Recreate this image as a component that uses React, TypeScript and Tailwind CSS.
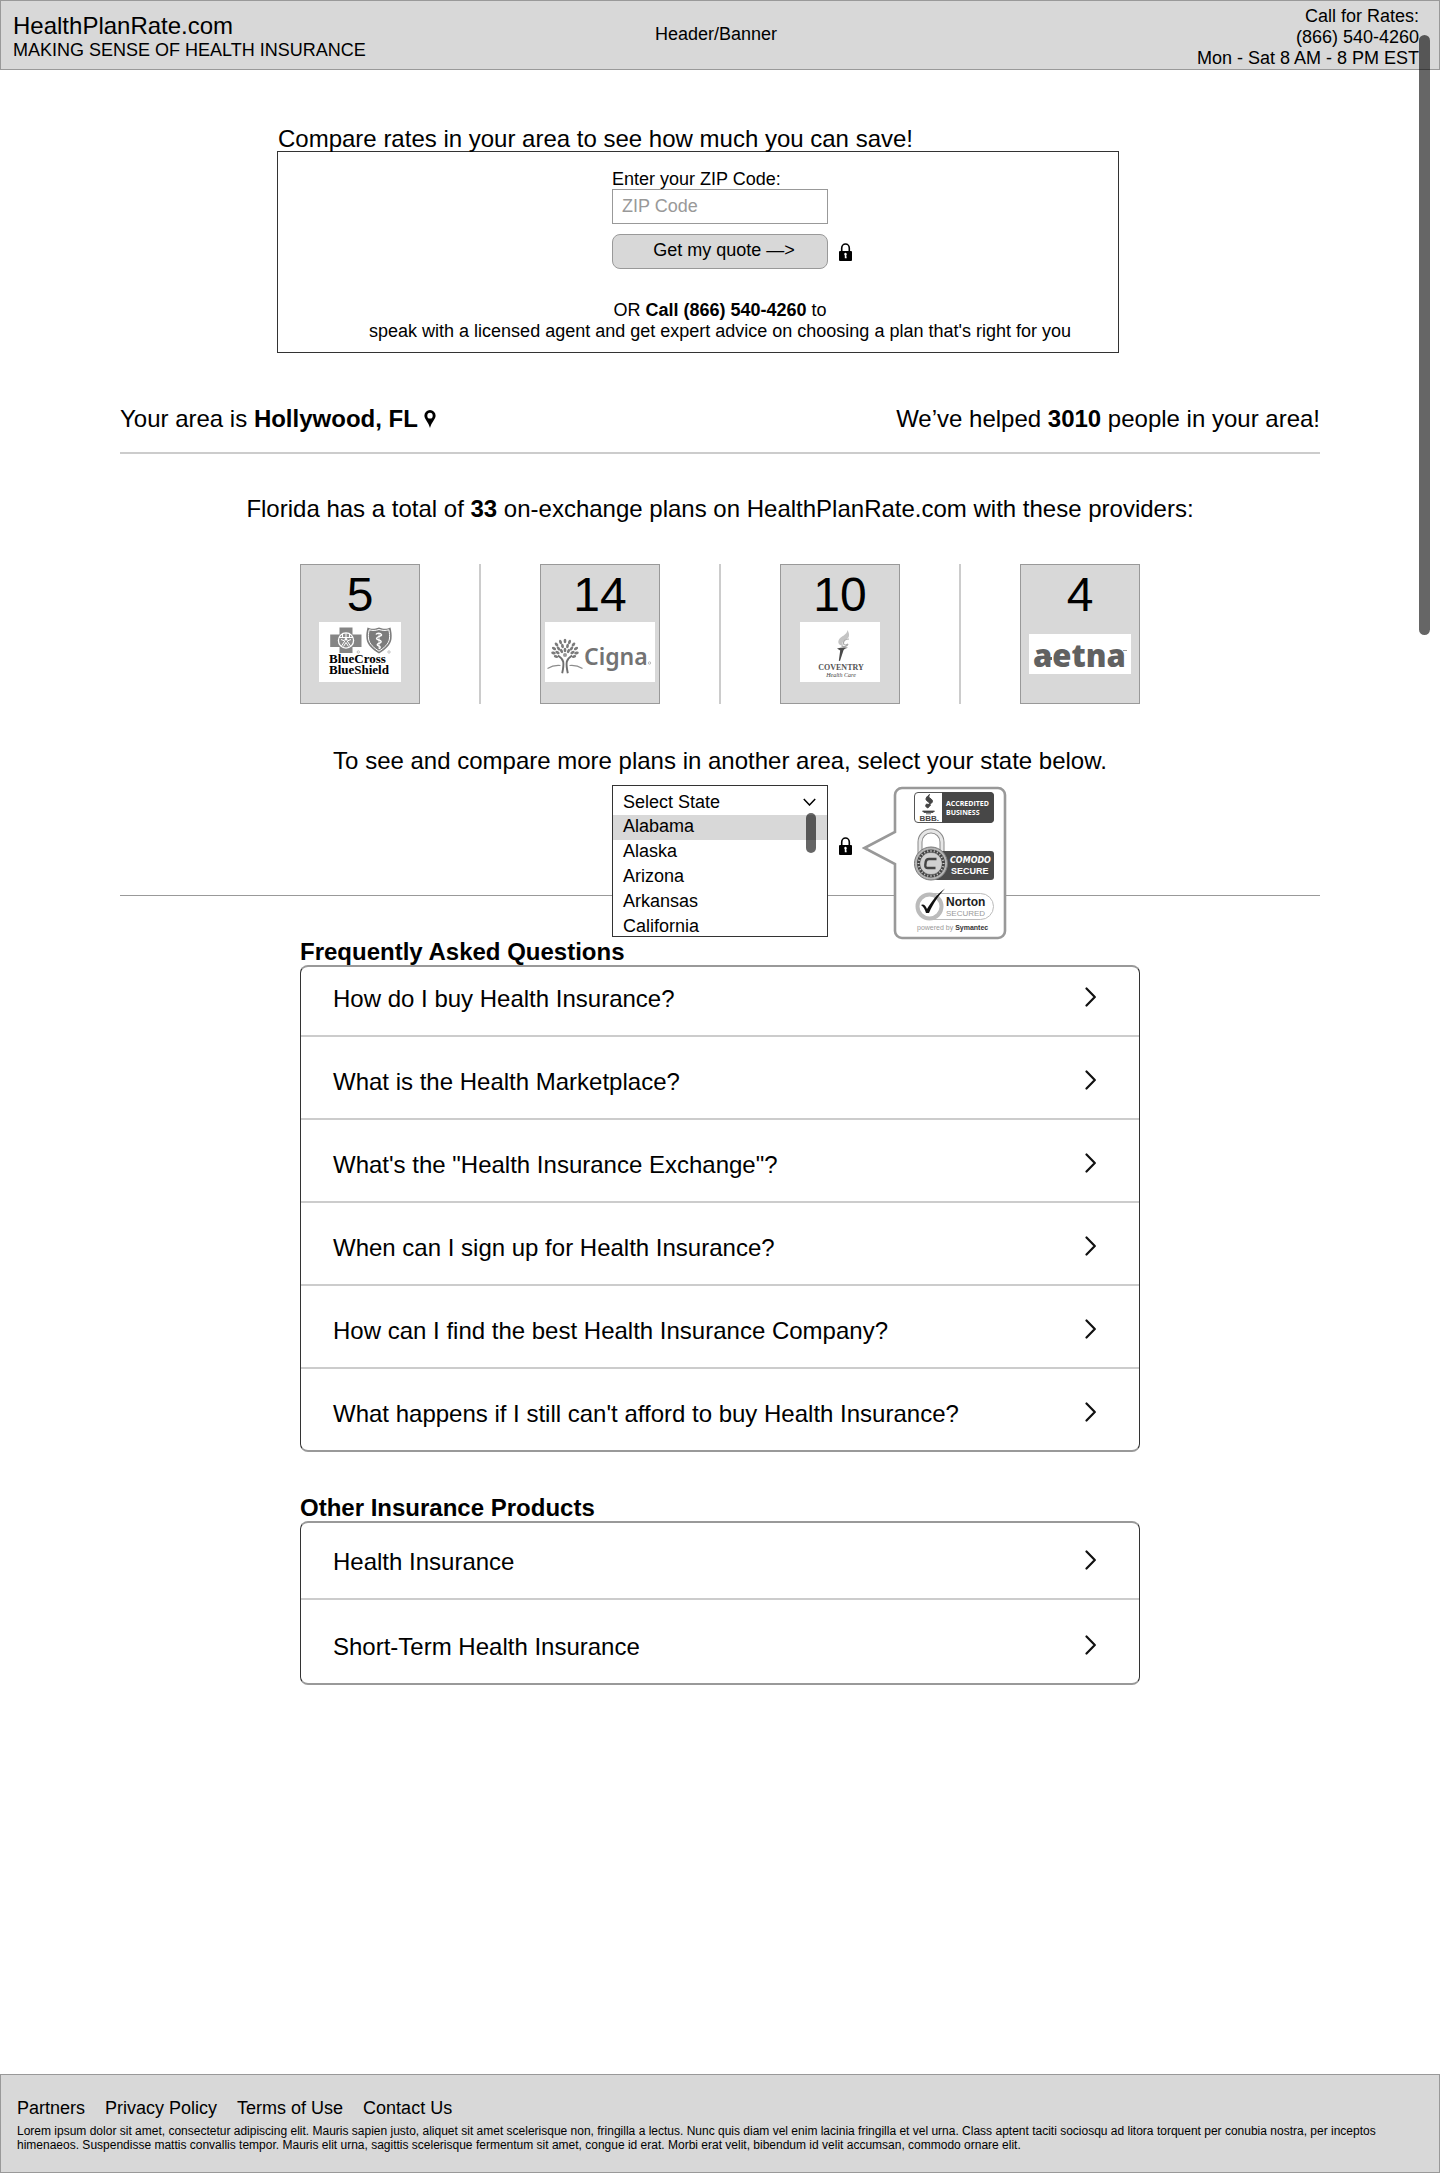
import type { ReactNode } from "react";

function LockIcon() {
  return (
    <svg width="13" height="18" viewBox="0 0 13 18" aria-hidden="true">
      <path d="M2.7 9V5.2a3.8 4.2 0 0 1 7.6 0V9" fill="none" stroke="#000" strokeWidth="1.6" />
      <rect x="0" y="8" width="13" height="10" rx="1" fill="#000" />
      <path d="M5.2 11.2a1.3 1.3 0 1 1 2.1 1l.4 3H5.8V12.4z" fill="#fff" />
    </svg>
  );
}

function PinIcon() {
  return (
    <svg width="12" height="18" viewBox="0 0 12 18" className="inline-block" aria-hidden="true">
      <path
        fillRule="evenodd"
        d="M6 0a5.6 5.6 0 0 0-5.6 5.7C.4 9.2 4.500 12 6 18c1.500-6 5.600-8.800 5.600-12.300A5.600 5.700 0 0 0 6 0zM6 2.800a2.700 2.900 0 1 1 0 5.800a2.700 2.900 0 0 1 0-5.800z"
        fill="#000"
      />
    </svg>
  );
}

function ChevronRight() {
  return (
    <svg width="12" height="20" viewBox="0 0 12 20" fill="none" className="shrink-0" aria-hidden="true">
      <path d="M1.500 1.500 9.800 10 1.500 18.500" stroke="#111" strokeWidth="2.200" strokeLinecap="round" strokeLinejoin="round" />
    </svg>
  );
}

function BlueCrossLogo() {
  return (
    <svg width="82" height="60" viewBox="0 0 82 60" className="bg-white" role="img" aria-label="BlueCross BlueShield">
      <path d="M20.500 5.500h13v7h9v12.500h-9v6h-13v-6h-9.300V12.500h9.300z" fill="#858585" />
      <circle cx="27" cy="18.500" r="7.600" fill="#8d8d8d" stroke="#fff" strokeWidth="1.300" />
      <path
        d="M20 15.500h14M27 11v5M23.500 12v3.500M30.500 12v3.500M22 17.500l3.800 1.500-3.300 5M32 17.500l-3.800 1.500 3.300 5M24.500 24.500 27 20.500l2.500 4"
        fill="none"
        stroke="#fff"
        strokeWidth="1"
      />
      <circle cx="27" cy="17.300" r="1.300" fill="#fff" />
      <path d="M48.500 5.500c4 1.800 7 1.500 11.500 0c4.500 1.500 7.500 1.800 11.500 0c.8 3.500 1.600 7 1 11.500c-.8 6-6 10.500-12.500 14.500c-6.500-4-11.700-8.500-12.500-14.500c-.6-4.500.2-8 1-11.500z" fill="#7c7c7c" />
      <path d="M50.200 7.800c3.500 1 6.300.8 9.800-.3c3.500 1.100 6.300 1.300 9.800.3c.8 3.200 1 6.200.6 9.200c-.8 5-5 8.700-10.400 12.200c-5.400-3.500-9.600-7.200-10.400-12.200c-.4-3-.2-6 .6-9.200z" fill="none" stroke="#fff" strokeWidth="1" />
      <path d="M60 11v16" stroke="#ddd" strokeWidth="1" />
      <path d="M57 12.500c1-1.800 4.500-1.500 5.500.2c.6 1.500-4.800 1.800-5 3.800c0 1.700 4.700 1.300 4.700 3.200c0 1.600-4 1.500-4 3c0 1.300 3 1.200 3 2.500c0 1-1.200 1.500-1.200 1.500" fill="none" stroke="#fff" strokeWidth="1.400" />
      <circle cx="39.300" cy="30" r="1.200" fill="none" stroke="#aaa" strokeWidth=".7" />
      <circle cx="70" cy="30" r="1.200" fill="none" stroke="#aaa" strokeWidth=".7" />
      <text x="10" y="41" className="font-['Liberation_Serif',serif] text-[13px] font-bold">BlueCross</text>
      <text x="10" y="52" className="font-['Liberation_Serif',serif] text-[13px] font-bold">BlueShield</text>
    </svg>
  );
}

const LEAVES: [number, number, number][] = [
  [20, 19, 0], [15.5, 20, -20], [24.500, 20, 20], [11.500, 22.500, -40], [28.500, 22.500, 40],
  [9, 26.500, -60], [31, 26.500, 60], [8.500, 31, -80], [31.500, 31, 80], [17.500, 24, -12],
  [22.500, 24, 12], [13.500, 26.500, -35], [26.500, 26.500, 35], [12.500, 30.500, -60],
  [27.500, 30.500, 60], [20, 28, 0], [16.500, 29, -25], [23.500, 29, 25], [11, 34.500, -70], [29, 34.500, 70],
];

function CignaLogo() {
  return (
    <svg width="110" height="60" viewBox="0 0 110 60" className="bg-white" role="img" aria-label="Cigna">
      {LEAVES.map(([x, y, angle]) => (
        <ellipse key={`${x}-${y}`} cx={x} cy={y} rx="1.400" ry="2.300" fill="#7b7b7b" transform={`rotate(${angle} ${x} ${y})`} />
      ))}
      <circle cx="20" cy="33" r="2" fill="#999" />
      <path d="M13 33.500c2.200 1.500 4.500 3.200 5.200 6.200c.7 4-.2 8-1 11.500M27 33.500c-2.200 1.500-4.500 3.200-5.200 6.200c-.7 4 .2 8 1 11.500" fill="none" stroke="#6f6f6f" strokeWidth="1.900" />
      <path d="M2.500 46.500c4-2.500 8.500-3.500 13-3M24.500 43.500c4.500-.5 9 .5 13 3" fill="none" stroke="#8c8c8c" strokeWidth="1.200" />
      <text x="39" y="43" fill="#737373" className="font-['Noto_Sans',sans-serif] text-[23px] font-semibold">Cigna</text>
      <circle cx="104.500" cy="41" r="1.200" fill="none" stroke="#aaa" strokeWidth=".8" />
    </svg>
  );
}

function CoventryLogo() {
  return (
    <svg width="80" height="60" viewBox="0 0 80 60" className="bg-white" role="img" aria-label="Coventry Health Care">
      <path d="M47.500 8c2.500 4.500 2 8-1.500 9.500c-3 1.300-4.500 3.500-2.500 6.500c-4-.5-6.500-3-4.500-6.500c2-3.300 8-4.500 8.500-9.500z" fill="#c4c4c4" />
      <path d="M49 17c-3.500.2-6 1.500-5.500 4.500c.3 1.800 3 2 4.500.5c-.8 2.500-4 3.500-6.500 2" fill="none" stroke="#aaa" strokeWidth="1.200" />
      <path d="M37 26.500c3.500-1.200 7-1.200 11-.8c-2.500.5-4 1.300-4.500 2.500L40 39l-1.200-.3l1.400-10.200z" fill="#4a4a4a" />
      <text x="41" y="48" textAnchor="middle" fill="#555" className="font-['Liberation_Serif',serif] text-[8px] font-bold">COVENTRY</text>
      <text x="41" y="55" textAnchor="middle" fill="#444" className="font-['Liberation_Serif',serif] text-[6px] italic">Health Care</text>
    </svg>
  );
}

function AetnaLogo() {
  return (
    <svg width="102" height="40" viewBox="0 0 102 40" className="overflow-visible bg-white" role="img" aria-label="Aetna">
      <text x="4" y="33" fill="#616161" className="font-['Open_Sans',sans-serif] text-[31px] font-extrabold">aetna</text>
      <path d="M17 24.500h6" stroke="#616161" strokeWidth="3" />
      <path d="M94 16.500h4" stroke="#999" strokeWidth="1" />
    </svg>
  );
}

function TrustBadges() {
  const ticks = Array.from({ length: 24 }, (_, i) => i * 15);
  return (
    <svg width="146" height="154" viewBox="0 0 146 154" role="img" aria-label="Security accreditations">
      <path
        d="M40 2h96a7 7 0 0 1 7 7v136a7 7 0 0 1-7 7H40a7 7 0 0 1-7-7V78L2.500 62 33 46V9a7 7 0 0 1 7-7z"
        fill="#fff"
        stroke="#999"
        strokeWidth="2.600"
      />
      {/* BBB */}
      <rect x="52.500" y="6.500" width="79" height="30" rx="3.500" fill="#fff" stroke="#555" />
      <path d="M80 6h48a4 4 0 0 1 4 4v23a4 4 0 0 1-4 4H80z" fill="#474747" />
      <path d="M67.500 8.500c-4.500 3.500-4.500 5.500-1 7.500c1.200.8 1.200 2-.5 3.500c5-2.500 6-5 2-7.200c-1.500-.9-1.300-2-.5-3.800zM64.500 18c-1.500 1.800-.8 3 1.300 4l2.700-3z" fill="#444" stroke="#444" strokeWidth="1" />
      <path d="M60.500 25h12l-1.500 1.500h-9zM64 27.800h5" fill="#444" stroke="#444" strokeWidth=".8" />
      <text x="57.500" y="35" fill="#444" className="font-['Liberation_Sans',sans-serif] text-[8px] font-bold">BBB.</text>
      <text x="84" y="20" fill="#fff" className="font-['Open_Sans',sans-serif] text-[7px] font-bold">ACCREDITED</text>
      <text x="84" y="29" fill="#fff" className="font-['Open_Sans',sans-serif] text-[7px] font-bold">BUSINESS</text>
      {/* Comodo */}
      <path d="M58 68V56a11 11 0 0 1 22 0v12" fill="none" stroke="#888" strokeWidth="5" />
      <path d="M58 68V56a11 11 0 0 1 22 0v12" fill="none" stroke="#e6e6e6" strokeWidth="3" />
      <rect x="72" y="65" width="60" height="29" rx="3" fill="#4a4a4a" />
      <circle cx="69" cy="77.500" r="16.500" fill="#b5b5b5" stroke="#777" />
      <circle cx="69" cy="77.500" r="12.500" fill="none" stroke="#444" strokeWidth="3" />
      {ticks.map((angle) => (
        <path key={angle} d="M69 64v2" stroke="#ccc" strokeWidth="1" transform={`rotate(${angle} 69 77.500)`} />
      ))}
      <circle cx="69" cy="77.500" r="10.500" fill="#d0d0d0" />
      <path d="M74.500 73h-7.500c-2 0-3 1-3.300 3l-.4 3c-.2 2 .6 3 2.500 3h7.700" fill="none" stroke="#444" strokeWidth="2.400" />
      <text x="88" y="77" fill="#fff" className="font-['DejaVu_Sans',sans-serif] text-[8px] font-bold italic">COMODO</text>
      <text x="89" y="88" fill="#fff" className="font-['Liberation_Sans',sans-serif] text-[9px] font-bold">SECURE</text>
      {/* Norton */}
      <path d="M67 107.500h51.500a13 13 0 0 1 0 26H67" fill="#fff" stroke="#bbb" />
      <circle cx="67.500" cy="120.500" r="12" fill="#fff" stroke="#bbb" strokeWidth="4" />
      <path d="M60.500 118.500c2 0 3.500 2 4.500 4.500C70 115 75 108 83 102.500C76.500 109.500 71.500 117 67 127h-3c-1-3.500-2.500-6.500-5-8z" fill="#111" />
      <text x="84" y="120" fill="#222" className="font-['Liberation_Sans',sans-serif] text-[12px] font-bold">Norton</text>
      <text x="84" y="130" fill="#999" className="font-['Liberation_Sans',sans-serif] text-[8px]">SECURED</text>
      <text x="55" y="144" fill="#999" className="font-['Liberation_Sans',sans-serif] text-[7px]">
        powered by <tspan fill="#333" className="font-bold">Symantec</tspan>
      </text>
    </svg>
  );
}

const PROVIDERS: { count: number; logo: ReactNode; tall: boolean }[] = [
  { count: 5, logo: <BlueCrossLogo />, tall: true },
  { count: 14, logo: <CignaLogo />, tall: true },
  { count: 10, logo: <CoventryLogo />, tall: true },
  { count: 4, logo: <AetnaLogo />, tall: false },
];

const STATES = ["Alabama", "Alaska", "Arizona", "Arkansas", "California"];

const QUESTIONS = [
  "How do I buy Health Insurance?",
  "What is the Health Marketplace?",
  "What's the \"Health Insurance Exchange\"?",
  "When can I sign up for Health Insurance?",
  "How can I find the best Health Insurance Company?",
  "What happens if I still can't afford to buy Health Insurance?",
];

const PRODUCTS = ["Health Insurance", "Short-Term Health Insurance"];

const FOOTER_LINKS = ["Partners", "Privacy Policy", "Terms of Use", "Contact Us"];

function LinkList({ title, items, rowClass }: { title: string; items: string[]; rowClass: string }) {
  return (
    <section className="mx-auto w-full max-w-[840px]">
      <h2 className="text-2xl leading-[27px] font-bold">{title}</h2>
      <ul className="divide-y-2 divide-[#ccc] rounded-lg border-x border-y-2 border-x-[#333] border-y-[#999]">
        {items.map((item) => (
          <li key={item}>
            <button type="button" className={`flex w-full items-end justify-between pr-[42px] pb-[22px] pl-8 text-left ${rowClass}`}>
              <span className="text-2xl leading-7">{item}</span>
              <span className="flex h-7 items-center pb-1">
                <ChevronRight />
              </span>
            </button>
          </li>
        ))}
      </ul>
    </section>
  );
}

export default function App() {
  return (
    <div className="relative flex min-h-screen flex-col bg-white font-['Liberation_Sans',Arial,sans-serif] text-lg leading-[21px] text-black">
      <header className="grid min-h-[70px] grid-cols-[1fr_auto_1fr] border border-[#999] bg-[#d8d8d8] pr-5 pl-3">
        <div className="pt-[11px]">
          <p className="text-2xl leading-7">HealthPlanRate.com</p>
          <p>MAKING SENSE OF HEALTH INSURANCE</p>
        </div>
        <p className="pt-[23px]">Header/Banner</p>
        <p className="pt-[5px] text-right">
          Call for Rates:
          <br />
          (866) 540-4260
          <br />
          Mon - Sat 8 AM - 8 PM EST
        </p>
      </header>

      <main className="mx-auto w-full max-w-[1200px] pb-16">
        <section className="mx-auto w-full max-w-[886px] pt-14 pr-11">
          <h1 className="pl-px text-2xl leading-[26px]">Compare rates in your area to see how much you can save!</h1>
          <form className="-mt-px flex flex-col items-center border border-[#333] pt-[17px] pb-2.5 pl-11" onSubmit={(e) => e.preventDefault()}>
            <div className="w-[216px]">
              <label htmlFor="zip" className="block leading-5">
                Enter your ZIP Code:
              </label>
              <input id="zip" type="text" placeholder="ZIP Code" className="block h-[35px] w-full border border-[#999] bg-white px-[9px] placeholder:text-[#999]" />
              <div className="relative mt-2.5">
                <button type="submit" className="block h-[35px] w-full rounded-lg border border-[#999] bg-[#d8d8d8] pb-0.5 pl-2">
                  Get my quote —&gt;
                </button>
                <span className="absolute top-[9px] left-full ml-[11px]">
                  <LockIcon />
                </span>
              </div>
            </div>
            <p className="mt-[31px] text-center">
              OR <b>Call (866) 540-4260</b> to
              <br />
              speak with a licensed agent and get expert advice on choosing a plan that's right for you
            </p>
          </form>
        </section>

        <section className="mt-[52px] flex justify-between border-b-2 border-[#ccc] pb-[19px] text-2xl leading-7">
          <p className="flex items-center gap-1.5">
            <span>
              Your area is <b>Hollywood, FL</b>
            </span>
            <PinIcon />
          </p>
          <p>
            We’ve helped <b>3010</b> people in your area!
          </p>
        </section>

        <section className="mt-[41px]">
          <p className="text-center text-2xl leading-7">
            Florida has a total of <b>33</b> on-exchange plans on HealthPlanRate.com with these providers:
          </p>
          <ul className="mx-auto mt-[41px] grid max-w-[960px] grid-cols-4">
            {PROVIDERS.map(({ count, logo, tall }) => (
              <li key={count} className="-mr-px flex justify-center border-r-2 border-[#ccc] pl-px last:mr-0 last:border-r-0 last:pl-0">
                <div className="flex h-[140px] w-[120px] flex-col items-center border border-[#999] bg-[#d8d8d8]">
                  <span className="pt-0.5 text-5xl leading-[55px]">{count}</span>
                  <span className={tall ? "" : "pt-3"}>{logo}</span>
                </div>
              </li>
            ))}
          </ul>
        </section>

        <section className="mt-[43px]">
          <p className="text-center text-2xl leading-7" id="state-label">
            To see and compare more plans in another area, select your state below.
          </p>
          <div className="relative mt-2.5 flex justify-center pb-px">
            <hr className="absolute inset-x-0 top-[110px] border-[#999]" />
            <div className="relative h-[152px] w-[216px] border border-[#333] bg-white">
              <button type="button" aria-expanded="true" className="flex h-[29px] w-full items-center justify-between pt-[3px] pr-[11px] pl-2.5">
                <span>Select State</span>
                <svg width="13" height="8" viewBox="0 0 13 8" fill="none" aria-hidden="true">
                  <path d="M.8 1l5.700 6 5.700-6" stroke="#000" strokeWidth="1.500" />
                </svg>
              </button>
              <select
                size={5}
                aria-labelledby="state-label"
                className="block h-[121px] w-full appearance-none overflow-hidden text-lg outline-none [scrollbar-width:none]"
              >
                {STATES.map((state) => (
                  <option key={state} className="h-[25px] pt-px pr-0 pb-0 pl-2.5 leading-[24px] first:bg-[#d8d8d8]">
                    {state}
                  </option>
                ))}
              </select>
              <span className="absolute top-[27px] right-[11px] h-10 w-2.5 rounded-full bg-black/60" />
              <span className="absolute top-[51px] left-full ml-3">
                <LockIcon />
              </span>
              <span className="absolute top-0 left-full ml-[35px]">
                <TrustBadges />
              </span>
            </div>
          </div>
        </section>

        <LinkList title="Frequently Asked Questions" items={QUESTIONS} rowClass="h-[81px] [li:first-child>&]:h-[68px]" />
        <div className="h-[42px]" />
        <LinkList title="Other Insurance Products" items={PRODUCTS} rowClass="h-[83px] [li:first-child>&]:h-[75px]" />
      </main>

      <footer className="mt-auto mb-px border border-[#999] bg-[#d8d8d8] px-4 pt-[23px] pb-5">
        <nav className="flex gap-5">
          {FOOTER_LINKS.map((link) => (
            <a key={link} href="#">
              {link}
            </a>
          ))}
        </nav>
        <p className="mt-[5px] text-xs leading-[14px]">
          Lorem ipsum dolor sit amet, consectetur adipiscing elit. Mauris sapien justo, aliquet sit amet scelerisque non, fringilla a lectus. Nunc quis diam vel enim lacinia
          fringilla et vel urna. Class aptent taciti sociosqu ad litora torquent per conubia nostra, per inceptos himenaeos. Suspendisse mattis convallis tempor. Mauris elit
          urna, sagittis scelerisque fermentum sit amet, congue id erat. Morbi erat velit, bibendum id velit accumsan, commodo ornare elit.
        </p>
      </footer>

      <div className="absolute top-[35px] right-2.5 h-[600px] w-[11px] rounded-full bg-black/60" />
    </div>
  );
}
